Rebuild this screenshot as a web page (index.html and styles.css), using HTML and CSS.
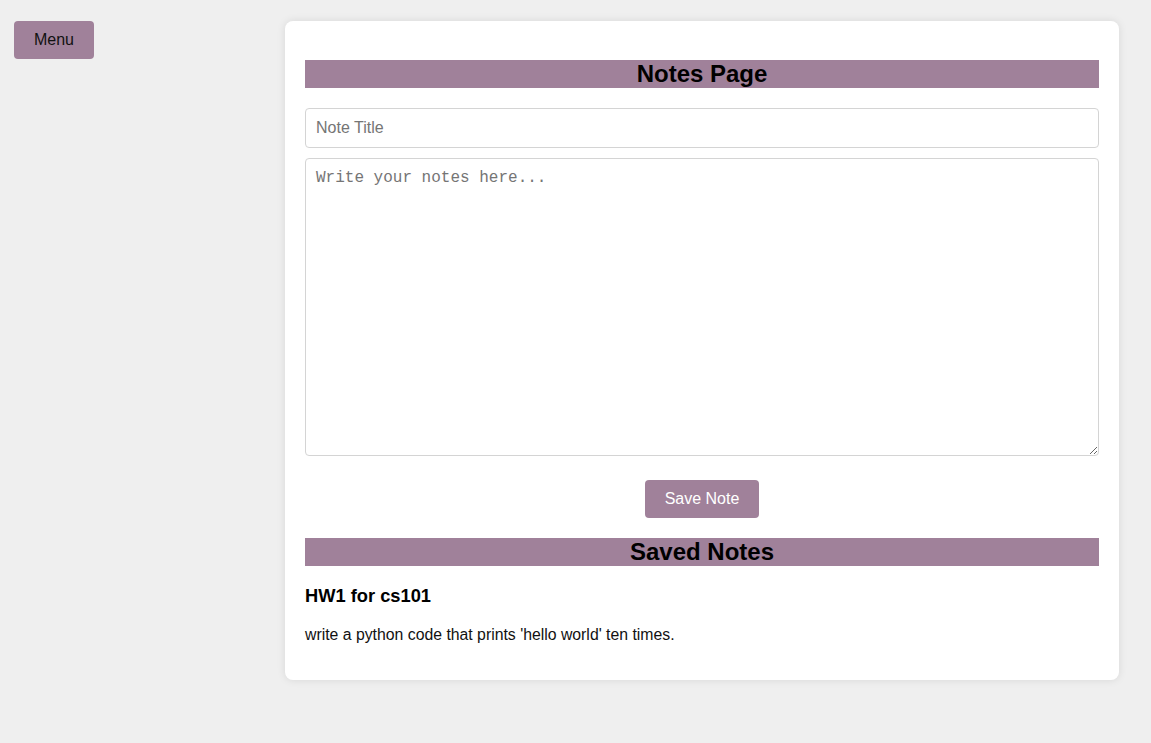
FILE: index.html
```html
<!DOCTYPE html>
<html lang="en">
<head>
<meta charset="utf-8">
<title>Notes Page</title>
<link rel="stylesheet" href="styles.css">
</head>
<body>
<div class="layout">
  <aside class="sidebar">
    <button class="menu-btn">Menu</button>
  </aside>
  <main class="main">
    <section class="card">
      <h2 class="bar">Notes Page</h2>
      <input class="title-input" type="text" placeholder="Note Title">
      <textarea class="note-area" placeholder="Write your notes here..."></textarea>
      <div class="actions">
        <button class="save-btn">Save Note</button>
      </div>
      <h2 class="bar">Saved Notes</h2>
      <div class="note">
        <h3 class="note-title">HW1 for cs101</h3>
        <p class="note-body">write a python code that prints 'hello world' ten times.</p>
      </div>
    </section>
  </main>
</div>
</body>
</html>
```

FILE: styles.css
```css
html, body {
  margin: 0;
  padding: 0;
  background: #efefef;
  font-family: "Liberation Sans", Arial, sans-serif;
  color: #000;
}

.layout {
  display: flex;
  align-items: flex-start;
  padding: 21px 32px 21px 14px;
}

.sidebar {
  width: 271px;
  flex: none;
}

.menu-btn {
  display: block;
  width: 80px;
  height: 38px;
  padding: 0;
  border: none;
  border-radius: 4px;
  background: #a0819a;
  color: #111;
  font-family: "Liberation Sans", Arial, sans-serif;
  font-size: 16px;
}

.main {
  flex: 1;
}

.card {
  background: #fff;
  border-radius: 8px;
  box-shadow: 0 0 8px rgba(0, 0, 0, 0.1);
  padding: 19px 20px 20px;
  display: flex;
  flex-direction: column;
}

.bar {
  margin: 20px 0;
  height: 28px;
  line-height: 28px;
  background: #a0819a;
  text-align: center;
  font-size: 24px;
  font-weight: bold;
}

.title-input {
  box-sizing: border-box;
  height: 40px;
  padding: 10px;
  border: 1px solid #d4d4d4;
  border-radius: 4px;
  font-family: "Liberation Sans", Arial, sans-serif;
  font-size: 16px;
}

.title-input::placeholder {
  color: #757575;
}

.note-area {
  box-sizing: border-box;
  margin-top: 10px;
  height: 298px;
  padding: 10px;
  border: 1px solid #d4d4d4;
  border-radius: 4px;
  font-family: "Liberation Mono", "DejaVu Sans Mono", monospace;
  font-size: 16px;
}

.note-area::placeholder {
  color: #757575;
}

.actions {
  display: flex;
  justify-content: center;
  margin-top: 24px;
}

.save-btn {
  height: 38px;
  padding: 0 20px;
  border: none;
  border-radius: 4px;
  background: #a0819a;
  color: #fff;
  font-family: "Liberation Sans", Arial, sans-serif;
  font-size: 16px;
}

.actions + .bar {
  margin-bottom: 0;
}

.note {
  padding-top: 19px;
}

.note-title {
  margin: 0;
  font-size: 18.3px;
  font-weight: bold;
}

.note-body {
  margin: 19px 0 16px;
  font-size: 15.8px;
  color: #111;
}
```
